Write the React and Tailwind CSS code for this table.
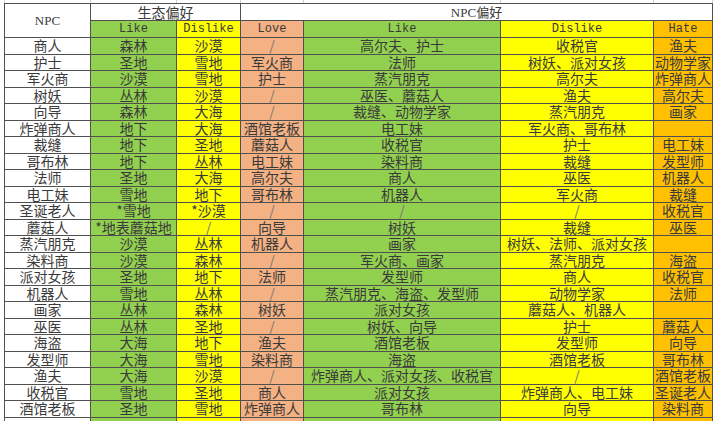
import React from 'react';

// NPC, 生态 Like, 生态 Dislike, Love, NPC Like, NPC Dislike, Hate
const rows = [
  ['商人', '森林', '沙漠', '/', '高尔夫、护士', '收税官', '渔夫'],
  ['护士', '圣地', '雪地', '军火商', '法师', '树妖、派对女孩', '动物学家'],
  ['军火商', '沙漠', '雪地', '护士', '蒸汽朋克', '高尔夫', '炸弹商人'],
  ['树妖', '丛林', '沙漠', '/', '巫医、蘑菇人', '渔夫', '高尔夫'],
  ['向导', '森林', '大海', '/', '裁缝、动物学家', '蒸汽朋克', '画家'],
  ['炸弹商人', '地下', '大海', '酒馆老板', '电工妹', '军火商、哥布林', ''],
  ['裁缝', '地下', '圣地', '蘑菇人', '收税官', '护士', '电工妹'],
  ['哥布林', '地下', '丛林', '电工妹', '染料商', '裁缝', '发型师'],
  ['法师', '圣地', '大海', '高尔夫', '商人', '巫医', '机器人'],
  ['电工妹', '雪地', '地下', '哥布林', '机器人', '军火商', '裁缝'],
  ['圣诞老人', '*雪地', '*沙漠', '/', '/', '/', '收税官'],
  ['蘑菇人', '*地表蘑菇地', '/', '向导', '树妖', '裁缝', '巫医'],
  ['蒸汽朋克', '沙漠', '丛林', '机器人', '画家', '树妖、法师、派对女孩', ''],
  ['染料商', '沙漠', '森林', '/', '军火商、画家', '蒸汽朋克', '海盗'],
  ['派对女孩', '圣地', '地下', '法师', '发型师', '商人', '收税官'],
  ['机器人', '雪地', '丛林', '/', '蒸汽朋克、海盗、发型师', '动物学家', '法师'],
  ['画家', '丛林', '森林', '树妖', '派对女孩', '蘑菇人、机器人', ''],
  ['巫医', '丛林', '圣地', '/', '树妖、向导', '护士', '蘑菇人'],
  ['海盗', '大海', '地下', '渔夫', '酒馆老板', '发型师', '向导'],
  ['发型师', '大海', '雪地', '染料商', '海盗', '酒馆老板', '哥布林'],
  ['渔夫', '大海', '沙漠', '/', '炸弹商人、派对女孩、收税官', '/', '酒馆老板'],
  ['收税官', '雪地', '圣地', '商人', '派对女孩', '炸弹商人、电工妹', '圣诞老人'],
  ['酒馆老板', '圣地', '雪地', '炸弹商人', '哥布林', '向导', '染料商'],
  ['', '', '', '', '', '', ''],
];

const colBg = [
  'bg-white',
  'bg-[#92d050]',
  'bg-[#ffff00]',
  'bg-[#f4b183]',
  'bg-[#92d050]',
  'bg-[#ffff00]',
  'bg-[#ffc000]',
];

const cell =
  'flex items-center justify-center border-r border-b border-[#505050] whitespace-nowrap overflow-hidden';
const cjk = "font-['Noto_Sans_CJK_SC',sans-serif] text-[14px] leading-[15px]";
const mono = "font-['Liberation_Mono',monospace] text-[12px] leading-[15px]";
const serif = "font-['Liberation_Serif','Noto_Sans_CJK_SC',serif] leading-[15px]";

function App() {
  return (
    <div className="w-[715px] h-[421px] overflow-hidden bg-white pl-[4px] text-[#3a3a3a]">
      {/* gridlines of the sheet row above */}
      <div className="grid grid-cols-[1px_86px_86px_64px_63px_197px_153px_59px] h-[3px]">
        <div className="bg-[#d0d0d0]" />
        {colBg.map((_, i) => (
          <div key={i} className="border-r border-[#d0d0d0]" />
        ))}
      </div>
      <div className="grid grid-cols-[86px_86px_64px_63px_197px_153px_59px] grid-rows-[17px_17px] auto-rows-[16.5px] w-max border-l border-t border-[#505050]">
        <div className={`${cell} row-span-2 bg-white ${serif} text-[13px]`}>NPC</div>
        <div className={`${cell} col-span-2 bg-white ${cjk}`}>生态偏好</div>
        <div className={`${cell} col-span-4 bg-white ${serif} text-[13px]`}>NPC偏好</div>

        <div className={`${cell} ${colBg[1]} ${mono}`}>Like</div>
        <div className={`${cell} ${colBg[2]} ${mono}`}>Dislike</div>
        <div className={`${cell} ${colBg[3]} ${mono}`}>Love</div>
        <div className={`${cell} ${colBg[4]} ${mono}`}>Like</div>
        <div className={`${cell} ${colBg[5]} ${mono}`}>Dislike</div>
        <div className={`${cell} ${colBg[6]} ${mono}`}>Hate</div>

        {rows.map((row, r) =>
          row.map((text, c) => (
            <div
              key={`${r}-${c}`}
              className={`${cell} ${colBg[c]} ${cjk} ${text === '/' ? 'text-[#777]' : ''}`}
            >
              {text}
            </div>
          ))
        )}
      </div>
    </div>
  );
}

export default App;
